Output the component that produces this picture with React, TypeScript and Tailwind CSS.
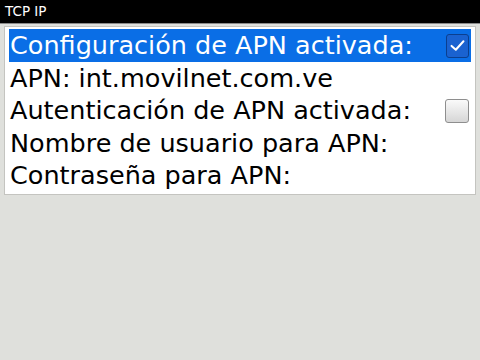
export default function App() {
  const rows = [
    { label: "Configuración de APN activada:", check: true, selected: true },
    { label: "APN: int.movilnet.com.ve" },
    { label: "Autenticación de APN activada:", check: false },
    { label: "Nombre de usuario para APN:" },
    { label: "Contraseña para APN:" },
  ];

  return (
    <div className="h-[360px] w-[480px] bg-[#dfe0dc] font-['DejaVu_Sans',sans-serif]">
      <div className="flex h-[24px] items-center border-b border-[#8a8a8a] bg-black px-[5px] text-[13.5px] text-white">
        TCP IP
      </div>

      <div className="mx-[4px] mt-[2px] border border-[#c4c4c0] bg-white px-[4px] py-[2px]">
        {rows.map((row, i) => (
          <div
            key={i}
            className={
              row.selected
                ? "flex h-[33px] items-center justify-between bg-[#0a6ee6] pl-[1px] pr-[2px] text-white"
                : "flex h-[32.5px] items-center justify-between pl-[1px] pr-[2px] text-black"
            }
          >
            <span className="text-[25.5px] leading-none">{row.label}</span>
            {row.check === true && (
              <span className="flex h-[24px] w-[23px] items-center justify-center rounded-[3px] border border-[#0b3f8f] bg-[#1a62d0]">
                <svg viewBox="0 0 20 20" className="h-[17px] w-[17px]">
                  <path
                    d="M3 10.5 L8 15 L17 5"
                    fill="none"
                    stroke="white"
                    strokeWidth="2.4"
                    strokeLinecap="round"
                    strokeLinejoin="round"
                  />
                </svg>
              </span>
            )}
            {row.check === false && (
              <span className="h-[24px] w-[24px] rounded-[3px] border border-[#8e8e8e] bg-gradient-to-b from-[#fafafa] to-[#d6d6d6]" />
            )}
          </div>
        ))}
      </div>
    </div>
  );
}
